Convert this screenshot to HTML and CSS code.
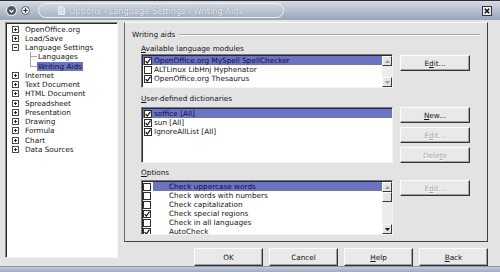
FILE: index.html
```html
<!DOCTYPE html>
<html lang="en">
<head>
  <meta charset="UTF-8">
  <title>Options - Language Settings - Writing Aids</title>
  <link rel="stylesheet" href="styles.css">
</head>
<body>
<div class="window">

  <!-- Title bar -->
  <div class="titlebar">
    <span class="tb-btn tb-menu">
      <svg width="5" height="4" viewBox="0 0 5 4"><path d="M0.5 0.8 L2.5 3.2 L4.5 0.8" fill="none" stroke="#fff" stroke-width="1.2"/></svg>
    </span>
    <span class="tb-btn tb-plus">
      <svg width="5" height="5" viewBox="0 0 5 5"><path d="M2.5 0.3v4.4M0.3 2.5h4.4" stroke="#2b2f36" stroke-width="1.2"/></svg>
    </span>
    <div class="tb-title">
      <svg class="tb-icon" width="7" height="9" viewBox="0 0 7 9"><path d="M0.5 0.5h4l2 2v6h-6z" fill="#d6dce5" stroke="#e9edf2"/></svg>
      <span>Options - Language Settings - Writing Aids</span>
    </div>
    <span class="tb-close">
      <svg width="6" height="6" viewBox="0 0 6 6"><path d="M0.8 0.8L5.2 5.2M5.2 0.8L0.8 5.2" stroke="#111" stroke-width="1.6"/></svg>
    </span>
  </div>

  <div class="body">

    <!-- Arbol de categorias -->
    <div class="tree">
      <div class="node"><span class="exp"></span>OpenOffice.org</div>
      <div class="node"><span class="exp"></span>Load/Save</div>
      <div class="node"><span class="exp minus"></span>Language Settings</div>
      <div class="child"><span class="branch"></span><span class="label">Languages</span></div>
      <div class="child last"><span class="branch"></span><span class="label sel">Writing Aids</span></div>
      <div class="node"><span class="exp"></span>Internet</div>
      <div class="node"><span class="exp"></span>Text Document</div>
      <div class="node"><span class="exp"></span>HTML Document</div>
      <div class="node"><span class="exp"></span>Spreadsheet</div>
      <div class="node"><span class="exp"></span>Presentation</div>
      <div class="node"><span class="exp"></span>Drawing</div>
      <div class="node"><span class="exp"></span>Formula</div>
      <div class="node"><span class="exp"></span>Chart</div>
      <div class="node"><span class="exp"></span>Data Sources</div>
    </div>

    <div class="content">
      <div class="page">
        <div class="legend"><span>Writing aids</span><span class="rule"></span></div>

        <!-- Modulos -->
        <div class="group">
          <div class="group-label"><u>A</u>vailable language modules</div>
          <div class="group-body">
            <div class="listbox lb-modules">
              <div class="rows">
                <div class="row sel"><span class="cb"><svg width="6" height="6" viewBox="0 0 6 6"><path d="M0.6 3.1 L2.3 5 L5.5 0.7" fill="none" stroke="#111" stroke-width="1.2"/></svg></span>OpenOffice.org MySpell SpellChecker</div>
                <div class="row"><span class="cb"></span>ALTLinux LibHnj Hyphenator</div>
                <div class="row"><span class="cb"><svg width="6" height="6" viewBox="0 0 6 6"><path d="M0.6 3.1 L2.3 5 L5.5 0.7" fill="none" stroke="#111" stroke-width="1.2"/></svg></span>OpenOffice.org Thesaurus</div>
              </div>
              <div class="scrollbar">
                <span class="sb-btn"><svg width="5" height="3" viewBox="0 0 5 3"><path d="M0 3h5L2.5 0z" fill="#9a9a9a"/></svg></span>
                <span class="sb-track"></span>
                <span class="sb-btn"><svg width="5" height="3" viewBox="0 0 5 3"><path d="M0 0h5L2.5 3z" fill="#9a9a9a"/></svg></span>
              </div>
            </div>
            <div class="side first">
              <button class="btn">E<u>d</u>it...</button>
            </div>
          </div>
        </div>

        <!-- Diccionarios -->
        <div class="group">
          <div class="group-label dict-label"><u>U</u>ser-defined dictionaries</div>
          <div class="group-body">
            <div class="listbox lb-dicts">
              <div class="rows">
                <div class="row sel"><span class="cb"><svg width="6" height="6" viewBox="0 0 6 6"><path d="M0.6 3.1 L2.3 5 L5.5 0.7" fill="none" stroke="#111" stroke-width="1.2"/></svg></span>soffice [All]</div>
                <div class="row"><span class="cb"><svg width="6" height="6" viewBox="0 0 6 6"><path d="M0.6 3.1 L2.3 5 L5.5 0.7" fill="none" stroke="#111" stroke-width="1.2"/></svg></span>sun [All]</div>
                <div class="row"><span class="cb"><svg width="6" height="6" viewBox="0 0 6 6"><path d="M0.6 3.1 L2.3 5 L5.5 0.7" fill="none" stroke="#111" stroke-width="1.2"/></svg></span>IgnoreAllList [All]</div>
              </div>
            </div>
            <div class="side">
              <button class="btn"><u>N</u>ew...</button>
              <button class="btn disabled">E<u>d</u>it...</button>
              <button class="btn disabled">Dele<u>t</u>e</button>
            </div>
          </div>
        </div>

        <!-- Opciones -->
        <div class="group">
          <div class="group-label opt-label"><u>O</u>ptions</div>
          <div class="group-body">
            <div class="listbox lb-options">
              <div class="rows">
                <div class="opt-row sel"><span class="opt-cb"><span class="cb"></span></span><span class="opt-text">Check uppercase words</span></div>
                <div class="opt-row"><span class="opt-cb"><span class="cb"></span></span><span class="opt-text">Check words with numbers</span></div>
                <div class="opt-row"><span class="opt-cb"><span class="cb"></span></span><span class="opt-text">Check capitalization</span></div>
                <div class="opt-row"><span class="opt-cb"><span class="cb"><svg width="6" height="6" viewBox="0 0 6 6"><path d="M0.6 3.1 L2.3 5 L5.5 0.7" fill="none" stroke="#111" stroke-width="1.2"/></svg></span></span><span class="opt-text">Check special regions</span></div>
                <div class="opt-row"><span class="opt-cb"><span class="cb"></span></span><span class="opt-text">Check in all languages</span></div>
                <div class="opt-row"><span class="opt-cb"><span class="cb"><svg width="6" height="6" viewBox="0 0 6 6"><path d="M0.6 3.1 L2.3 5 L5.5 0.7" fill="none" stroke="#111" stroke-width="1.2"/></svg></span></span><span class="opt-text">AutoCheck</span></div>
              </div>
              <div class="scrollbar">
                <span class="sb-btn"><svg width="5" height="3" viewBox="0 0 5 3"><path d="M0 3h5L2.5 0z" fill="#9a9a9a"/></svg></span>
                <span class="sb-thumb"></span>
                <span class="sb-track"></span>
                <span class="sb-btn"><svg width="5" height="3" viewBox="0 0 5 3"><path d="M0 0h5L2.5 3z" fill="#111"/></svg></span>
              </div>
            </div>
            <div class="side">
              <button class="btn disabled">E<u>d</u>it...</button>
            </div>
          </div>
        </div>
      </div>

      <!-- Botones del dialogo -->
      <div class="actions">
        <button class="btn">OK</button>
        <button class="btn">Cancel</button>
        <button class="btn"><u>H</u>elp</button>
        <button class="btn"><u>B</u>ack</button>
      </div>
    </div>
  </div>

  <div class="statusbar"></div>
</div>
</body>
</html>
```

FILE: styles.css
```css
* { margin: 0; padding: 0; box-sizing: border-box; }
body {
  width: 500px;
  height: 272px;
  overflow: hidden;
  font-family: "DejaVu Sans", sans-serif;
  font-size: 7.3px;
  color: #161616;
  background: #e3e3e3;
}

.window {
  display: flex;
  flex-direction: column;
  height: 272px;
}

/* Title bar */
.titlebar {
  height: 20px;
  flex: none;
  display: flex;
  align-items: center;
  padding-left: 7px;
  border-top: 1px solid #2e2e2e;
  background: linear-gradient(#d5dbe3, #b3bdcb 55%, #98a5b7);
}

.tb-btn {
  width: 9px;
  height: 9px;
  border-radius: 50%;
  flex: none;
  display: flex;
  align-items: center;
  justify-content: center;
}
.tb-menu { background: #4d5560; box-shadow: 0 0 0 1px #eef1f5; }
.tb-plus { margin-left: 5px; background: #f1f3f6; border: 1px solid #59616c; }

.tb-title {
  margin-left: 8px;
  width: 246px;
  height: 15px;
  border: 1px solid #eef2f7;
  border-radius: 8px;
  background: linear-gradient(#ced5df, #a9b4c4);
  display: flex;
  align-items: center;
  gap: 4px;
  padding-left: 19px;
  color: #f2f4f7;
  font-size: 8.2px;
  white-space: nowrap;
  text-shadow: 0 0 1px #5d6b80;
}

.tb-close {
  margin-left: auto;
  margin-right: 8px;
  width: 10px;
  height: 10px;
  background: #eef0f3;
  border: 1px solid #30343a;
  display: flex;
  align-items: center;
  justify-content: center;
}

/* Body */
.body {
  flex: 1;
  display: flex;
  gap: 6px;
  padding: 2px 0 0 5px;
}

.tree {
  width: 113px;
  height: 236px;
  background: #fff;
  border: 1px solid;
  border-color: #8a8a8a #f6f6f6 #f6f6f6 #8a8a8a;
  box-shadow: inset 1px 1px 0 #2a2a2a;
  padding-top: 1.5px;
}

.node {
  height: 9.25px;
  display: flex;
  align-items: center;
  padding-left: 6px;
  white-space: nowrap;
}

.exp {
  width: 7px;
  height: 7px;
  flex: none;
  margin-right: 6px;
  border: 1px solid #4a4a4a;
  background:
    linear-gradient(#222, #222) center / 3px 1px no-repeat,
    linear-gradient(#222, #222) center / 1px 3px no-repeat,
    #fff;
}
.exp.minus {
  background: linear-gradient(#222, #222) center / 3px 1px no-repeat, #fff;
}

.child {
  height: 9.25px;
  display: flex;
  padding-left: 24px;
  white-space: nowrap;
}
.branch {
  width: 7px;
  flex: none;
  background:
    linear-gradient(#a6a6a6, #a6a6a6) 0 0 / 1px 100% no-repeat,
    linear-gradient(#a6a6a6, #a6a6a6) 0 50% / 100% 1px no-repeat;
}
.child.last .branch { background-size: 1px 50%, 100% 1px; }
.child .label {
  display: flex;
  align-items: center;
  padding: 0 1px;
}
.sel { background: #6c73c3; color: #0d0d40; }

/* Right side */
.content {
  width: 364px;
  display: flex;
  flex-direction: column;
}

.page {
  height: 220px;
  border: 1px solid;
  border-color: #fafafa #404040 #404040 #6a6a6a;
  padding: 7px 7px 0 7px;
}

.legend {
  height: 9px;
  display: flex;
  align-items: center;
  gap: 4px;
}
.rule {
  flex: 1;
  height: 2px;
  border-top: 1px solid #a8a8a8;
  border-bottom: 1px solid #fff;
}

.group { margin-left: 9px; }
.group-label {
  height: 9px;
  line-height: 9px;
  margin-top: 5px;
  margin-bottom: 1px;
}
.dict-label { margin-top: 6px; margin-bottom: 4px; }
.opt-label { margin-top: 5px; margin-bottom: 3px; }

.group-body {
  display: flex;
  gap: 7px;
}

.listbox {
  width: 252px;
  background: #fff;
  border: 1px solid;
  border-color: #7a7a7a #f4f4f4 #f4f4f4 #7a7a7a;
  box-shadow: inset 1px 1px 0 #2a2a2a;
  display: flex;
  overflow: hidden;
}
.lb-modules { height: 34px; }
.lb-dicts { height: 56px; }
.lb-options { height: 55px; }

.rows {
  flex: 1;
  padding: 1px 0 0 1px;
  overflow: hidden;
}

.row {
  height: 9px;
  display: flex;
  align-items: center;
  gap: 2px;
  padding-left: 1px;
  white-space: nowrap;
}

.cb {
  width: 8px;
  height: 8px;
  flex: none;
  border: 1px solid #2e2e2e;
  background: #fff;
  display: flex;
  align-items: center;
  justify-content: center;
}

.opt-row {
  height: 9px;
  display: flex;
  white-space: nowrap;
}
.opt-cb {
  width: 10px;
  flex: none;
  display: flex;
  align-items: center;
}
.opt-text {
  flex: 1;
  display: flex;
  align-items: center;
  padding-left: 16px;
}
.opt-row.sel { background: none; }
.opt-row.sel .opt-text { background: #6c73c3; color: #0d0d40; }

.scrollbar {
  width: 10px;
  flex: none;
  display: flex;
  flex-direction: column;
  margin-top: 1px;
  background: #ececec;
}
.sb-btn, .sb-thumb {
  height: 10px;
  flex: none;
  background: #e4e4e4;
  border: 1px solid;
  border-color: #fff #3a3a3a #3a3a3a #fff;
  display: flex;
  align-items: center;
  justify-content: center;
}
.sb-track { flex: 1; }

.side {
  width: 70px;
  display: flex;
  flex-direction: column;
  gap: 4px;
}
.side.first { padding-top: 1px; }

.btn {
  height: 16px;
  font: inherit;
  color: inherit;
  background: #e9e9e9;
  border: 1px solid;
  border-color: #fcfcfc #343434 #343434 #fcfcfc;
  box-shadow: inset -1px -1px 0 #a0a0a0;
  display: flex;
  align-items: center;
  justify-content: center;
}
.btn.disabled { color: #a6a6a6; text-shadow: 1px 1px 0 #fff; }

.actions {
  display: flex;
  justify-content: flex-end;
  gap: 6px;
  margin-top: 6px;
}
.actions .btn { width: 69px; height: 18px; }

.statusbar {
  height: 6px;
  flex: none;
  border-top: 1px solid #8994a6;
  background: linear-gradient(#c3ccd8, #9eabbd);
}
```
